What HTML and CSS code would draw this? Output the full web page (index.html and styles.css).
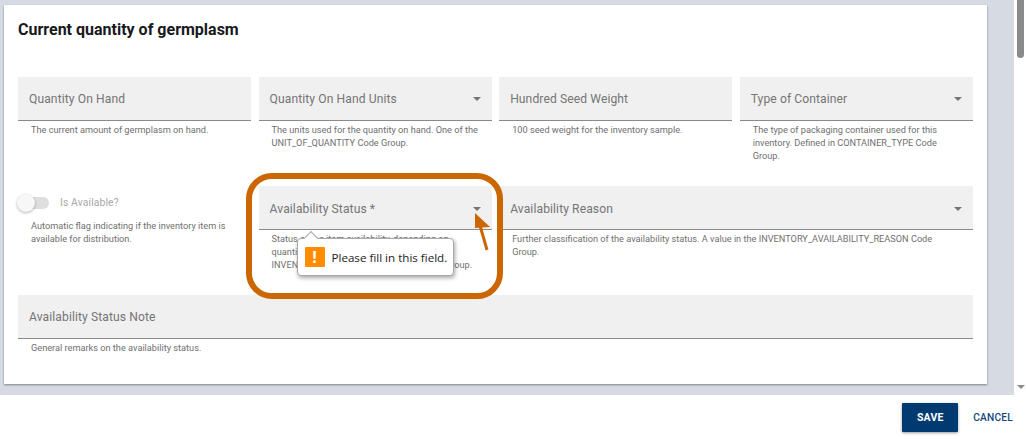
FILE: index.html
```html
<!DOCTYPE html>
<html lang="en">
<head>
<meta charset="utf-8">
<title>Current quantity of germplasm</title>
<link rel="stylesheet" href="styles.css">
</head>
<body>
<div class="app">
  <div class="viewport">
    <main class="content">
      <section class="card">
        <h1 class="title">Current quantity of germplasm</h1>
        <div class="form-grid row-one">
          <div class="cell">
            <div class="field"><span class="label">Quantity On Hand</span></div>
            <p class="hint">The current amount of germplasm on hand.</p>
          </div>
          <div class="cell">
            <div class="field"><span class="label">Quantity On Hand Units</span><span class="caret"></span></div>
            <p class="hint">The units used for the quantity on hand. One of the UNIT_OF_QUANTITY Code Group.</p>
          </div>
          <div class="cell">
            <div class="field"><span class="label">Hundred Seed Weight</span></div>
            <p class="hint">100 seed weight for the inventory sample.</p>
          </div>
          <div class="cell">
            <div class="field"><span class="label">Type of Container</span><span class="caret"></span></div>
            <p class="hint">The type of packaging container used for this inventory. Defined in CONTAINER_TYPE Code Group.</p>
          </div>
        </div>
        <div class="form-grid row-two">
          <div class="cell">
            <div class="toggle-row">
              <span class="toggle"><span class="track"></span><span class="thumb"></span></span>
              <span class="toggle-label">Is Available?</span>
            </div>
            <p class="hint hint-toggle">Automatic flag indicating if the inventory item is available for distribution.</p>
          </div>
          <div class="cell">
            <div class="field"><span class="label">Availability Status *</span><span class="caret"></span></div>
            <p class="hint">Status of the item availability, depending on quantity on hand. A value in the INVENTORY_AVAILABILITY_STATUS Code Group.</p>
          </div>
          <div class="cell span-two">
            <div class="field"><span class="label">Availability Reason</span><span class="caret"></span></div>
            <p class="hint">Further classification of the availability status. A value in the INVENTORY_AVAILABILITY_REASON Code Group.</p>
          </div>
        </div>
        <div class="form-grid row-three">
          <div class="cell span-four">
            <div class="field"><span class="label">Availability Status Note</span></div>
            <p class="hint">General remarks on the availability status.</p>
          </div>
        </div>
      </section>
    </main>
    <div class="scrollbar">
      <span class="thumb-bar"></span>
      <span class="scroll-down"></span>
    </div>
  </div>
  <footer class="actions">
    <button class="btn-save" type="button">SAVE</button>
    <button class="btn-cancel" type="button">CANCEL</button>
  </footer>

  <div class="highlight"></div>
  <svg class="pointer" width="30" height="50" viewBox="0 0 30 50">
    <path d="M17 38 L9 10" fill="none" stroke="#cc6600" stroke-width="3"/>
    <path d="M5 1 L20 15 L5 16 Z" fill="#cc6600"/>
  </svg>
  <div class="tooltip">
    <span class="tip-notch"></span>
    <span class="tip-icon">!</span>
    <span class="tip-text">Please fill in this field.</span>
  </div>
</div>
</body>
</html>
```
FILE: styles.css
```css
* { box-sizing: border-box; }
html, body { margin: 0; padding: 0; height: 100%; overflow: hidden; }
body { font-family: Roboto, "Liberation Sans", sans-serif; background: #fff; }

.app { position: relative; width: 1026px; height: 439px; display: flex; flex-direction: column; }

.viewport { height: 395px; display: flex; }
.content { width: 1014px; background: #d5dae3; padding: 5px 27px 11px 4px; }
.card {
  height: 379px;
  background: #fff;
  padding: 16px 14px 0;
  box-shadow: 0 1px 2px rgba(0,0,0,.4);
}
.title { margin: 0; font-size: 16px; line-height: 18px; font-weight: 700; color: #17191c; letter-spacing: 0; }

.form-grid { display: grid; grid-template-columns: repeat(4, 1fr); column-gap: 7.25px; }
.row-one { margin-top: 38px; height: 109px; }
.row-two { height: 109px; }
.row-two .field { padding-top: 2px; }
.span-two { grid-column: span 2; }
.span-four { grid-column: span 4; }

.field {
  height: 44px;
  background: #f0f0f0;
  border-bottom: 1px solid #8a8a8a;
  display: flex;
  align-items: center;
  justify-content: space-between;
  padding: 1px 11px 0 11px;
}
.label { font-size: 12.1px; color: #757575; letter-spacing: .1px; }
.caret { width: 0; height: 0; border-left: 4px solid transparent; border-right: 4px solid transparent; border-top: 4px solid #757575; }
.hint { margin: 2px 0 0; padding: 0 13px 0 13px; font-size: 9.2px; line-height: 13px; color: #6f6f6f; }
.hint-toggle { margin-top: 0; }

.toggle-row { height: 33px; display: flex; align-items: center; gap: 11px; }
.toggle { position: relative; width: 32px; height: 18px; margin-left: -1px; flex: none; }
.track { position: absolute; left: 1px; top: 3px; width: 31px; height: 12px; border-radius: 6px; background: #dedede; }
.thumb { position: absolute; left: 0; top: 0; width: 18px; height: 18px; border-radius: 50%; background: #f7f7f7; box-shadow: 0 1px 3px rgba(0,0,0,.3); }
.toggle-label { font-size: 10.4px; color: #a8a8a8; letter-spacing: .1px; }

.scrollbar { position: relative; width: 12px; background: #fff; }
.thumb-bar { position: absolute; left: 3px; top: 0; width: 7px; height: 58px; background: #8a8a8a; border-radius: 0 0 4px 4px; }
.scroll-down { position: absolute; left: 3px; top: 385px; width: 0; height: 0; border-left: 4px solid transparent; border-right: 4px solid transparent; border-top: 4px solid #8a8a8a; }

.actions { flex: 1; display: flex; align-items: flex-start; justify-content: flex-end; padding: 8px 13px 0 0; gap: 15px; background: #fff; }
.btn-save {
  width: 56px; height: 29px; border: 0; border-radius: 1px; background: #003a70; color: #fff;
  font: 700 10.5px Roboto, sans-serif; letter-spacing: .2px;
  box-shadow: 0 1px 3px rgba(0,0,0,.4);
}
.btn-cancel { border: 0; padding: 0; height: 29px; background: none; color: #14497c; font: 500 10.2px Roboto, sans-serif; letter-spacing: .2px; }

.highlight { position: absolute; left: 246px; top: 173px; width: 257px; height: 126px; border: 6.5px solid #cc6600; border-radius: 26px; }
.pointer { position: absolute; left: 470px; top: 212px; }

.tooltip {
  position: absolute; left: 297px; top: 238px; width: 157px; height: 38px;
  background: #fff; border: 1px solid #a9a9a9; border-radius: 4px;
  box-shadow: 1px 2px 4px rgba(0,0,0,.35);
  display: flex; align-items: center; gap: 7px; padding: 0 0 0 6.5px;
}
.tip-notch { position: absolute; left: 8px; top: -6px; width: 10px; height: 10px; background: #fff; border-left: 1px solid #a9a9a9; border-top: 1px solid #a9a9a9; transform: rotate(45deg); }
.tip-icon { width: 20px; height: 20px; flex: none; border-radius: 1px; background: #ff8c00; color: #fff; text-align: center; font: 700 16px/20px "Open Sans", sans-serif; }
.tip-text { font: 11.6px "Open Sans", sans-serif; color: #222; white-space: nowrap; }
```
